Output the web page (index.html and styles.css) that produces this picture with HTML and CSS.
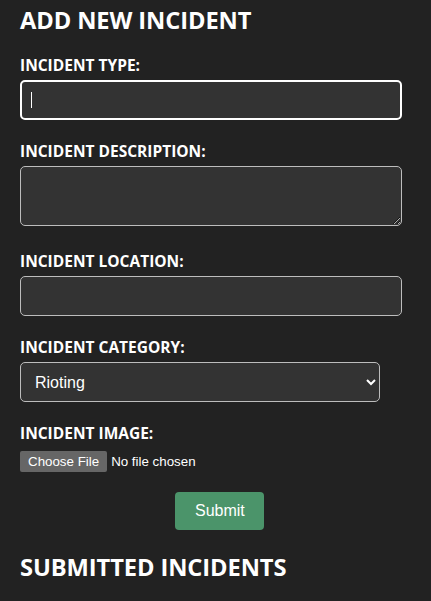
FILE: index.html
```html
<!DOCTYPE html>
<html lang="en">
<head>
<meta charset="utf-8">
<title>Add New Incident</title>
<link rel="stylesheet" href="styles.css">
</head>
<body>
<main class="page">
  <h2 class="heading">ADD NEW INCIDENT</h2>
  <form class="form">
    <label class="label" for="type">INCIDENT TYPE:</label>
    <div class="field-wrap">
      <input class="control control-focused" id="type" type="text">
      <span class="caret"></span>
    </div>
    <label class="label" for="desc">INCIDENT DESCRIPTION:</label>
    <textarea class="control control-area" id="desc"></textarea>
    <label class="label" for="loc">INCIDENT LOCATION:</label>
    <input class="control" id="loc" type="text">
    <label class="label" for="cat">INCIDENT CATEGORY:</label>
    <select class="control control-select" id="cat">
      <option>Rioting</option>
      <option>Theft</option>
      <option>Vandalism</option>
    </select>
    <label class="label" for="img">INCIDENT IMAGE:</label>
    <input class="file" id="img" type="file">
    <button class="submit" type="button">Submit</button>
  </form>
  <h2 class="heading heading-second">SUBMITTED INCIDENTS</h2>
</main>
</body>
</html>
```
FILE: styles.css
```css
html, body {
  margin: 0;
  padding: 0;
  background: #222222;
  color: #ffffff;
}
.page {
  padding: 0 20px;
  width: 382px;
}
.heading {
  margin: 4px 0 0;
  font-family: "Open Sans", sans-serif;
  font-weight: 700;
  font-size: 23.7px;
  letter-spacing: -0.1px;
  line-height: 32px;
}
.heading-second {
  margin-top: 21px;
}
.form {
  display: flex;
  flex-direction: column;
  align-items: flex-start;
  margin-top: 19px;
}
.label {
  display: block;
  font-family: "Open Sans", sans-serif;
  font-weight: 700;
  font-size: 15.5px;
  line-height: 20px;
  margin-bottom: 5px;
}
.field-wrap {
  position: relative;
  width: 382px;
  margin-bottom: 21px;
}
.control {
  box-sizing: border-box;
  display: block;
  width: 382px;
  height: 40px;
  padding: 10px;
  margin: 0 0 21px;
  background: #333333;
  color: #ffffff;
  border: 1px solid #bdbdbd;
  border-radius: 5px;
  font-family: "Liberation Sans", Arial, sans-serif;
  font-size: 16px;
  outline: none;
}
.field-wrap .control {
  margin: 0;
}
.control-focused {
  border: 2px solid #ffffff;
}
.caret {
  position: absolute;
  left: 11px;
  top: 12px;
  width: 1px;
  height: 16px;
  background: #ffffff;
}
.control-area {
  height: 60px;
  margin-bottom: 25px;
  resize: vertical;
}
.control-select {
  width: 360px;
}
.file {
  margin: 3px 0 20px;
  font-family: "Liberation Sans", Arial, sans-serif;
  font-size: 13.333px;
  color: #ffffff;
}
.file::file-selector-button {
  background: #666666;
  color: #ffffff;
  border: none;
  border-radius: 2px;
  padding: 3px 8px;
  margin-right: 4px;
  font-family: "Liberation Sans", Arial, sans-serif;
  font-size: 13.333px;
}
.submit {
  margin-left: 155px;
  width: 89px;
  height: 38px;
  padding: 10px 20px;
  background: #4b946a;
  color: #ffffff;
  border: none;
  border-radius: 4px;
  font-family: "Liberation Sans", Arial, sans-serif;
  font-size: 16px;
}
```
